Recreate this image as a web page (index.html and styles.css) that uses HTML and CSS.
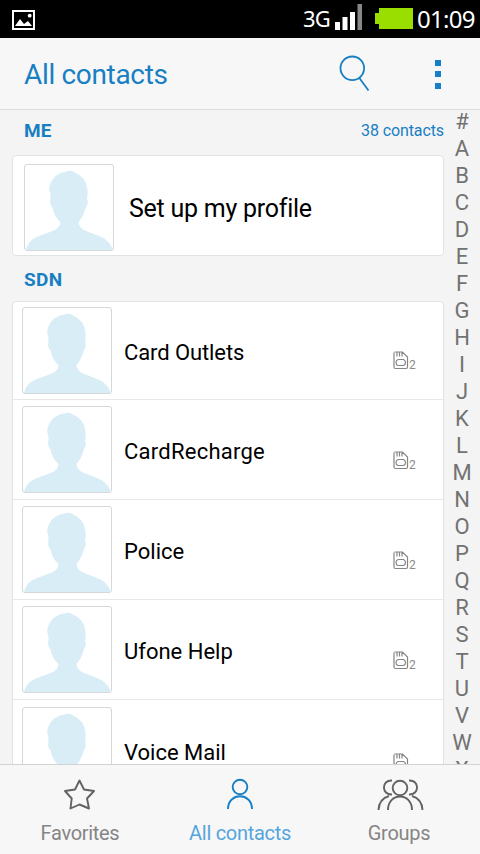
FILE: index.html
```html
<!DOCTYPE html>
<html lang="en">
<head>
<meta charset="utf-8">
<title>All contacts</title>
<link rel="stylesheet" href="styles.css">
</head>
<body>
<svg class="defs" width="0" height="0">
  <symbol id="person" viewBox="0 0 88 85">
    <path d="M1 85C3 78 6 74 14 71L29 65.500Q35 63 35.500 57C31 53 29 49 27.500 42.500Q24.500 40 25.300 35L25.500 29Q23.500 25 24.800 20Q29 8 42 6.200Q47 5 50 7.500Q61 12 62.500 24Q63 28 62 34Q64 38 61 42C59 49 57 53 53.500 57Q54 63 60 65.500L74 71C82 74 86 79 88 85Z" fill="#d8edf6"/>
  </symbol>
  <symbol id="sim" viewBox="0 0 16 19">
    <path d="M1.500 1H9.500L14.500 6V16Q14.500 17.500 13 17.500H2.500Q1 17.500 1 16V1.500M4 1V5.500M6.500 1V5.500M9 1V5.500M5 8.500H10.500Q12.500 9.500 12.500 11.500Q12.500 14 10.500 14.500H5Q3 14 3 11.500Q3 9.500 5 8.500Z" fill="none" stroke="#858585" stroke-width="1.200"/>
  </symbol>
</svg>
<div class="screen">
  <div class="status">
    <svg class="picture" width="24" height="22" viewBox="0 0 24 22"><path d="M1 1H22V19H1Z" fill="none" stroke="#fff" stroke-width="2"/><path d="M3 16L8 9L12 14L16 11L20 16Z" fill="#fff"/><circle cx="17.700" cy="5.700" r="1.900" fill="#fff"/></svg>
    <span class="network">3G</span>
    <svg class="signal" width="28" height="27" viewBox="0 0 28 27"><path d="M0 18H5V26H0ZM7.500 13H12.500V26H7.500ZM15 8H20V26H15Z" fill="#fff"/><path d="M22.500 0H27V26H22.500Z" fill="#888"/></svg>
    <svg class="battery" width="38" height="22" viewBox="0 0 38 22"><path d="M4 0H38V21H4V16H0V5H4Z" fill="#9ade00"/></svg>
    <span class="clock">01:09</span>
  </div>
  <header class="header">
    <h1 class="title">All contacts</h1>
    <svg class="search" width="32" height="37" viewBox="0 0 32 37"><circle cx="13.300" cy="13.300" r="11.800" fill="none" stroke="#187fc2" stroke-width="1.800"/><path d="M20 22.500L29.500 35.500" stroke="#187fc2" stroke-width="1.800"/></svg>
    <svg class="more" width="6" height="29" viewBox="0 0 6 29"><path d="M0 0H6V6H0ZM0 11H6V17H0ZM0 23H6V29H0Z" fill="#1580c8"/></svg>
  </header>
  <main class="content">
    <div class="lists">
      <div class="section"><h2>ME</h2><span class="count">38 contacts</span></div>
      <div class="card profile">
        <div class="avatar"><svg><use href="#person"/></svg></div>
        <span class="profile-name">Set up my profile</span>
      </div>
      <div class="section sdn"><h2>SDN</h2></div>
      <div class="card">
        <div class="row first"><div class="avatar"><svg><use href="#person"/></svg></div><span class="name outlets">Card Outlets</span><span class="sim"><svg><use href="#sim"/></svg>2</span></div>
        <div class="row"><div class="avatar"><svg><use href="#person"/></svg></div><span class="name recharge">CardRecharge</span><span class="sim"><svg><use href="#sim"/></svg>2</span></div>
        <div class="row"><div class="avatar"><svg><use href="#person"/></svg></div><span class="name">Police</span><span class="sim"><svg><use href="#sim"/></svg>2</span></div>
        <div class="row"><div class="avatar"><svg><use href="#person"/></svg></div><span class="name">Ufone Help</span><span class="sim"><svg><use href="#sim"/></svg>2</span></div>
        <div class="row last"><div class="avatar"><svg><use href="#person"/></svg></div><span class="name">Voice Mail</span><span class="sim"><svg><use href="#sim"/></svg></span></div>
      </div>
    </div>
    <nav class="index"><span>#</span><span>A</span><span>B</span><span>C</span><span>D</span><span>E</span><span>F</span><span>G</span><span>H</span><span>I</span><span>J</span><span>K</span><span>L</span><span>M</span><span>N</span><span>O</span><span>P</span><span>Q</span><span>R</span><span>S</span><span>T</span><span>U</span><span>V</span><span>W</span><span>X</span></nav>
  </main>
  <footer class="tabs">
    <div class="tab"><svg width="34" height="34" viewBox="0 0 34 34"><path d="M16.500 3.500L21 12.500L31 14L24 21.500L26 31.500L16.500 27.500L7.500 31.500L8.700 21.500L2 14L12 12.500Z" fill="none" stroke="#626262" stroke-width="1.900" stroke-linejoin="round"/></svg><span>Favorites</span></div>
    <div class="tab active"><svg width="34" height="34" viewBox="0 0 34 34"><g fill="none" stroke="#187fc2" stroke-width="1.900"><circle cx="17" cy="10" r="7.300"/><path d="M5 32C5 15 29 15 29 32"/></g></svg><span>All contacts</span></div>
    <div class="tab"><svg width="48" height="34" viewBox="0 0 48 34"><g fill="none" stroke="#626262" stroke-width="1.900"><circle cx="24" cy="11" r="7.300"/><path d="M12 33C12 15 36 15 36 33M16 3.500C5 3 5.500 18 16 17.500M33 3.500C44 3 43.500 18 33 17.500M2.500 33Q3 22 13 19M46.500 33Q46 22 36 19"/></g></svg><span class="groups">Groups</span></div>
  </footer>
</div>
</body>
</html>
```
FILE: styles.css
```css
* { box-sizing: border-box; }
body { margin: 0; font-family: Roboto, "Liberation Sans", sans-serif; }
svg { display: block; flex: none; }
.defs { position: absolute; }
h1, h2 { margin: 0; }
.screen { width: 480px; height: 854px; display: flex; flex-direction: column; overflow: hidden; background: #f4f4f4; }
.status { height: 38px; flex: none; display: flex; align-items: flex-start; background: #000; color: #fff; white-space: nowrap; }
.picture { margin: 10px 0 0 12px; }
.network { margin: 2px 0 0 267px; width: 32px; font: 22px/32px "Noto Sans", sans-serif; letter-spacing: -.9px; }
.signal { margin-top: 4px; }
.battery { margin: 8px 0 0 12px; }
.clock { margin: 3px 0 0 4px; font: 24px/32px "Noto Sans", sans-serif; letter-spacing: -.7px; }
.header { height: 72px; flex: none; display: flex; align-items: center; padding-left: 24px; background: #f7f7f7; border-bottom: 1px solid #dadada; }
.title { width: 315px; font-size: 28px; line-height: 34px; font-weight: 400; letter-spacing: -.33px; color: #187fc2; padding-top: 3px; }
.more { margin: 2px 0 0 64px; }
.content { height: 654px; flex: none; display: flex; overflow: hidden; }
.lists { width: 432px; margin-left: 12px; flex: none; }
.section { height: 45px; padding: 0 0 4px 12px; display: flex; align-items: center; justify-content: space-between; color: #187fc2; }
.section h2 { font-size: 19px; font-weight: 700; line-height: 24px; }
.section.sdn { padding-bottom: 0; }
.section.sdn h2 { margin-bottom: -2px; letter-spacing: .3px; }
.count { font-size: 16px; letter-spacing: -.1px; }
.card { background: #fff; border: 1px solid #e2e2e2; border-radius: 4px; }
.profile { height: 101px; display: flex; align-items: flex-start; padding: 8px 0 0 11px; }
.avatar { width: 90px; height: 87px; flex: none; border: 1px solid #d5d8da; border-radius: 3px; overflow: hidden; }
.avatar svg { width: 88px; height: 85px; }
.profile-name { margin: 29px 0 0 15px; font-size: 25px; line-height: 32px; letter-spacing: -.25px; }
.row { height: 100px; display: flex; align-items: flex-start; padding: 6px 0 0 9px; border-bottom: 1px solid #e8e8e8; }
.row.first { height: 98px; padding-top: 5px; }
.row.last { padding-top: 7px; }
.name { width: 269px; margin: 31px 0 0 12px; font-size: 22px; line-height: 30px; }
.outlets { letter-spacing: -.1px; }
.recharge { letter-spacing: .25px; }
.sim { display: flex; align-items: flex-end; margin-top: 45px; height: 20px; font-size: 12px; line-height: 12px; color: #8b8b8b; }
.first .sim { margin-top: 44px; }
.sim svg { width: 16px; height: 19px; margin-bottom: 1px; }
.last .sim { margin-top: 46px; }
.index { width: 36px; display: flex; flex-direction: column; align-items: center; font-size: 22px; line-height: 27px; color: #727272; margin-top: -2px; }
.index span { height: 27px; flex: none; }
.tabs { height: 90px; flex: none; display: grid; grid-template-columns: repeat(3, 160px); background: #f7f7f7; border-top: 1px solid #d3d3d3; }
.tab { display: flex; flex-direction: column; align-items: center; padding-top: 12px; font-size: 20px; line-height: 24px; letter-spacing: -.3px; color: #858585; }
.tab span { margin-top: 10px; }
.groups { margin-left: -2px; }
.active { color: #54a5dd; }
```
